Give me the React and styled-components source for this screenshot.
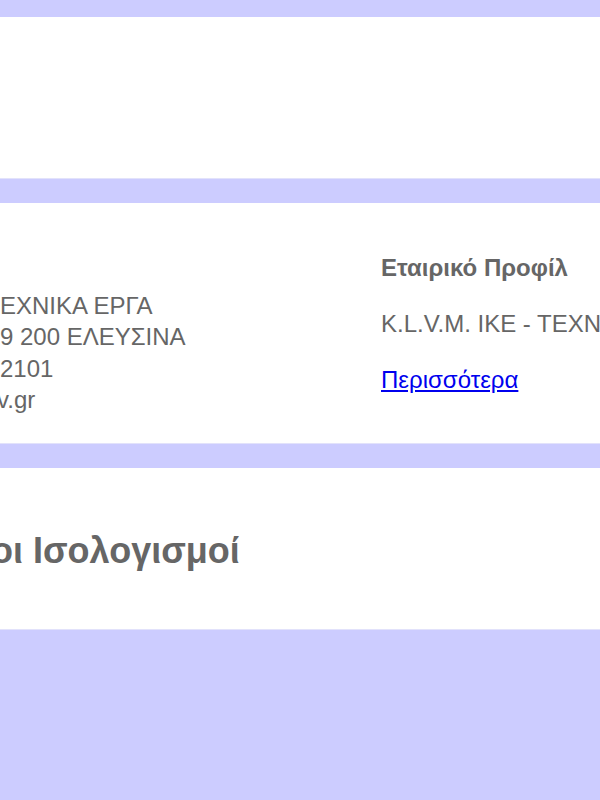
import styled, { createGlobalStyle } from "styled-components";

const GlobalStyle = createGlobalStyle`
  html, body {
    margin: 0;
    padding: 0;
    background: #ccccff;
    overflow: hidden;
    font-family: "Liberation Sans", Arial, sans-serif;
  }
`;

const Page = styled.div`
  width: 100%;
  min-height: 800px;
  padding-top: 17px;
  display: flex;
  flex-direction: column;
  gap: 24px;
  background: #ccccff;
`;

const Panel = styled.section`
  background: #ffffff;
  height: ${(p) => p.h}px;
  box-sizing: border-box;
  border-bottom: 1px solid #e2e2fb;
  overflow: hidden;
`;

const Columns = styled.div`
  display: grid;
  grid-template-columns: 381px 1fr;
  height: 100%;
`;

const Contact = styled.div`
  padding-top: 87px;
  color: #666666;
  font-size: 24px;
  line-height: 31.4px;
  white-space: nowrap;
  overflow: hidden;
`;

const ContactLine = styled.div`
  margin-left: ${(p) => p.shift || 0}px;
`;

const Profile = styled.div`
  padding-top: 25px;
  color: #666666;
  font-size: 24px;
  line-height: 31.5px;
  white-space: nowrap;
`;

const ProfileTitle = styled.h4`
  margin: 24px 0;
  font-size: 24px;
  font-weight: bold;
`;

const ProfileText = styled.p`
  margin: 24.5px 0;
`;

const MoreLink = styled.a`
  color: #0000ee;
  text-decoration: underline;
`;

const Heading = styled.h2`
  margin: 0 0 0 -9px;
  padding-top: 63px;
  font-size: 36px;
  line-height: 40px;
  font-weight: bold;
  color: #666666;
  white-space: nowrap;
`;

export default function App() {
  return (
    <>
      <GlobalStyle />
      <Page>
        <Panel h={162} />
        <Panel h={241}>
          <Columns>
            <Contact>
              <ContactLine>ΕΧΝΙΚΑ ΕΡΓΑ</ContactLine>
              <ContactLine>9 200 ΕΛΕΥΣΙΝΑ</ContactLine>
              <ContactLine>2101</ContactLine>
              <ContactLine shift={-3}>v.gr</ContactLine>
            </Contact>
            <Profile>
              <ProfileTitle>Εταιρικό Προφίλ</ProfileTitle>
              <ProfileText>K.L.V.M. IKE - TEXNΙΚΑ ΕΡΓΑ</ProfileText>
              <ProfileText>
                <MoreLink href="#">Περισσότερα</MoreLink>
              </ProfileText>
            </Profile>
          </Columns>
        </Panel>
        <Panel h={162}>
          <Heading>οι Ισολογισμοί</Heading>
        </Panel>
      </Page>
    </>
  );
}
